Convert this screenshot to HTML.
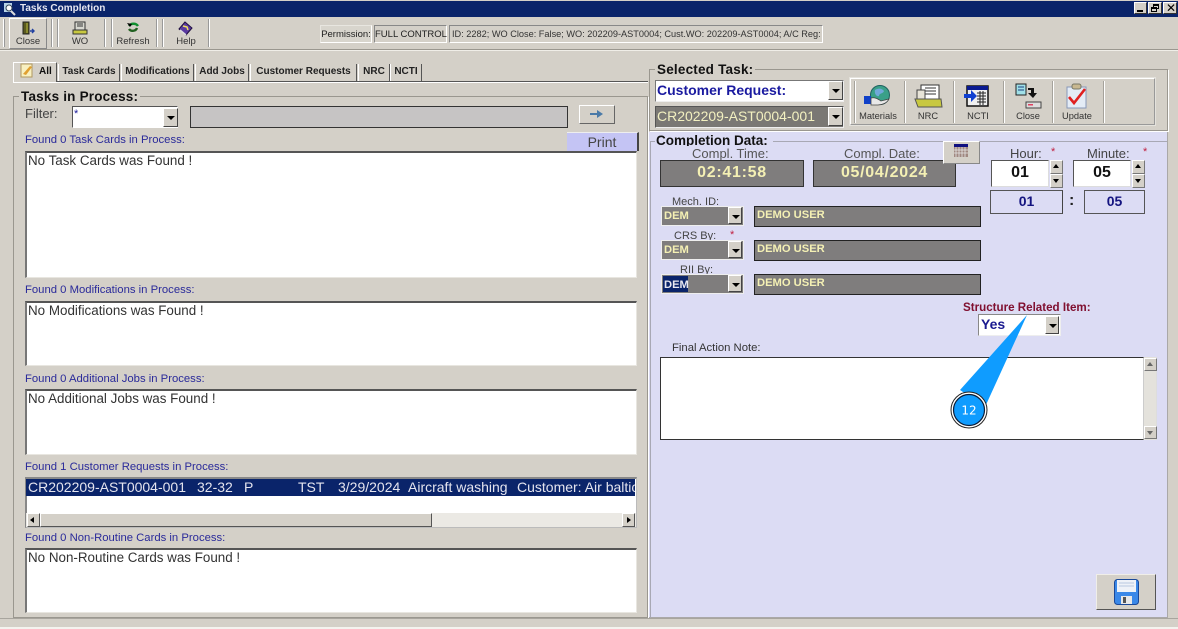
<!DOCTYPE html>
<html><head><meta charset="utf-8"><style>
html,body{margin:0;padding:0}
body{width:1178px;height:629px;overflow:hidden;background:#d4d0c8;position:relative;font-family:"Liberation Sans",sans-serif;color:#222}
div,span,svg{position:absolute;box-sizing:border-box}
.t{white-space:nowrap;line-height:1}
.sep{width:2px;top:19px;height:28px;border-left:1px solid #999;border-right:1px solid #fff}
.sep2{width:2px;top:81px;height:42px;border-left:1px solid #a5a29b;border-right:1px solid #fff}
.lb{font-size:9.5px;color:#333;text-align:center;line-height:1}
.blue{font-size:11.3px;color:#2a2a9a;white-space:nowrap;line-height:1;left:25px}
.box{left:25px;width:612px;background:#fff;border:1px solid #e8e6e0;border-top:2px solid #555;border-left:2px solid #777;font-size:13.4px;color:#333;padding:0 2px 0 1px;line-height:16px}
.tab{top:64px;height:17px;font-size:10px;font-weight:bold;color:#222;line-height:16px;text-align:center;border-left:1px solid #fff;border-right:1px solid #555;white-space:nowrap}
.gb{border:1px solid #9a978f;box-shadow:1px 1px 0 #fff}
.cap{font-size:13.5px;font-weight:bold;color:#111;background:#d4d0c8;padding:0 2px;line-height:1;white-space:nowrap;letter-spacing:.2px}
.dd{width:15px;height:19px;background:#d4d0c8;border:1px solid;border-color:#fff #444 #444 #fff}
.dd:after{content:"";position:absolute;left:3px;top:7px;border:4px solid transparent;border-top:4px solid #000;border-bottom:0}
.gr{background:#7f7d7d;border:1px solid #222;color:#f4f0b4;font-weight:bold;font-size:11.2px;font-family:"Liberation Sans",sans-serif}
.g2{background:#7f7d7d;border:1px solid #333;color:#f4f0b4;font-weight:bold;text-align:center;font-size:16px;letter-spacing:.7px}
.gl{font-size:12px;color:#444;line-height:1;white-space:nowrap}
.star{color:#c02040;font-size:11px;line-height:1}
.sp{width:13px;height:14px;background:#d4d0c8;border:1px solid;border-color:#fff #777 #777 #fff}
</style></head><body>
<!-- title bar -->
<div style="left:0;top:1px;width:1178px;height:16px;background:#0a246a"></div>
<svg style="left:3px;top:2px" width="13" height="14" viewBox="0 0 13 14"><rect x="1" y="1" width="8" height="9" fill="#b8d4e8"/><circle cx="6" cy="6" r="3" fill="#fff" stroke="#345" /><path d="M8 9l4 4" stroke="#ddd" stroke-width="2"/></svg>
<div class="t" style="left:20px;top:4px;font-size:10px;font-weight:bold;color:#e6e6f0">Tasks Completion</div>
<div style="left:1134px;top:2px;width:13px;height:12px;background:#d4d0c8;border:1px solid;border-color:#fff #333 #333 #fff"><div style="left:2px;top:7px;width:6px;height:2px;background:#000"></div></div>
<div style="left:1148px;top:2px;width:14px;height:12px;background:#d4d0c8;border:1px solid;border-color:#fff #333 #333 #fff"><div style="left:4px;top:1px;width:6px;height:5px;border:1px solid #000;border-top-width:2px"></div><div style="left:2px;top:4px;width:6px;height:5px;border:1px solid #000;border-top-width:2px;background:#d4d0c8"></div></div>
<div style="left:1163px;top:2px;width:14px;height:12px;background:#d4d0c8;border:1px solid;border-color:#fff #333 #333 #fff"><div class="t" style="left:2px;top:-1px;font-size:12px;color:#000">✕</div></div>
<!-- toolbar -->
<div style="left:0;top:49px;width:1178px;height:1px;background:#9a978f"></div>
<div style="left:0;top:50px;width:1178px;height:1px;background:#f0eee8"></div>
<div style="left:3px;top:19px;width:2px;height:28px;border-left:1px solid #fff;border-right:1px solid #999"></div>
<div style="left:9px;top:18px;width:38px;height:31px;border:1px solid;border-color:#fff #888 #888 #fff"></div>
<div class="sep" style="left:51px"></div><div class="sep" style="left:57px"></div>
<div class="sep" style="left:104px"></div><div class="sep" style="left:111px"></div>
<div class="sep" style="left:156px"></div><div class="sep" style="left:162px"></div>
<div class="sep" style="left:208px"></div>
<svg style="left:21px;top:21px" width="14" height="15" viewBox="0 0 14 15"><path d="M2 1h6v12H2z" fill="#5a5a20" stroke="#222"/><path d="M5 2h2v10H5z" fill="#8a8a30"/><path d="M9 10h3M11 8l2 2-2 2" stroke="#2040a0" stroke-width="1.4" fill="none"/></svg>
<div class="lb t" style="left:10px;top:37px;width:36px">Close</div>
<svg style="left:72px;top:21px" width="17" height="15" viewBox="0 0 17 15"><rect x="3" y="1" width="10" height="8" fill="#d8d8d0" stroke="#333"/><path d="M5 3h6M5 5h6" stroke="#333"/><path d="M1 9h14v4H1z" fill="#c8c840" stroke="#333"/></svg>
<div class="lb t" style="left:62px;top:37px;width:36px">WO</div>
<svg style="left:126px;top:22px" width="14" height="13" viewBox="0 0 14 13"><path d="M3 4c2-3 7-3 9 0" stroke="#109030" stroke-width="2.4" fill="none"/><path d="M11 6c-1 3-6 4-8 1" stroke="#206020" stroke-width="2.4" fill="none"/><path d="M1 1l3 4 2-3z" fill="#000"/></svg>
<div class="lb t" style="left:113px;top:37px;width:40px">Refresh</div>
<svg style="left:178px;top:21px" width="15" height="15" viewBox="0 0 15 15"><path d="M7 1l7 6-6 7-7-6z" fill="#5a3aa0" stroke="#201040"/><path d="M5 5l4 1 1 3" stroke="#f0e060" fill="none" stroke-width="1.5"/><path d="M2 9l6 5" stroke="#ddd" stroke-width="1.5"/></svg>
<div class="lb t" style="left:166px;top:37px;width:40px">Help</div>
<!-- permission -->
<div class="t" style="left:320px;top:25px;width:52px;height:18px;background:#d8d5cd;border:1px solid;border-color:#e8e6e0 #fff #fff #e8e6e0;font-size:9.5px;line-height:17px;text-align:center;color:#222">Permission:</div>
<div class="t" style="left:374px;top:25px;width:73px;height:18px;border:1px solid;border-color:#888 #fff #fff #888;font-size:9.5px;line-height:17px;text-align:center;color:#222">FULL CONTROL</div>
<div class="t" style="left:449px;top:25px;width:374px;height:18px;border:1px solid;border-color:#888 #fff #fff #888;font-size:9.2px;line-height:16px;padding-left:2px;overflow:hidden;color:#333">ID: 2282; WO Close: False; WO: 202209-AST0004; Cust.WO: 202209-AST0004; A/C Reg:</div>
<!-- tabs -->
<div style="left:13px;top:81px;width:635px;height:1px;background:#555"></div>
<div style="left:13px;top:82px;width:635px;height:1px;background:#fff"></div>
<div style="left:13px;top:62px;width:44px;height:20px;background:#d4d0c8;border-top:1px solid #fff;border-left:1px solid #fff;border-right:1px solid #555"></div>
<svg style="left:20px;top:63px" width="14" height="15" viewBox="0 0 14 15"><rect x="1" y="1" width="11" height="13" fill="#f8f0c0" stroke="#b09860"/><path d="M3 11L10 3l2 1-6 8z" fill="#e0a030"/></svg>
<div class="t" style="left:39px;top:67px;font-size:10px;font-weight:bold;color:#111">All</div>
<div class="tab" style="left:58px;width:62px">Task Cards</div>
<div class="tab" style="left:121px;width:73px">Modifications</div>
<div class="tab" style="left:195px;width:54px">Add Jobs</div>
<div class="tab" style="left:250px;width:107px">Customer Requests</div>
<div class="tab" style="left:358px;width:32px">NRC</div>
<div class="tab" style="left:390px;width:32px">NCTI</div>
<!-- tasks group -->
<div class="gb" style="left:13px;top:96px;width:635px;height:522px"></div>
<div class="cap" style="left:19px;top:90px">Tasks in Process:</div>
<div class="t" style="left:25px;top:107px;font-size:13px;color:#444">Filter:</div>
<div style="left:72px;top:106px;width:106px;height:22px;background:#fff;border:1px solid;border-color:#555 #fff #fff #555;font-size:11px;color:#1a1a9a;padding-left:1px;line-height:14px">*</div>
<div class="dd" style="left:163px;top:108px"></div>
<div style="left:190px;top:106px;width:378px;height:22px;background:#c6c4c4;border:1px solid #333"></div>
<div style="left:579px;top:105px;width:36px;height:19px;background:#d4d0c8;border:1px solid;border-color:#fff #666 #666 #fff"></div>
<svg style="left:590px;top:109px" width="14" height="10" viewBox="0 0 14 10"><path d="M0 4h7V1l6 4-6 4V6H0z" fill="#4a7aa8"/></svg>
<div class="t" style="left:567px;top:132px;width:72px;height:19px;background:#c4c4f4;border-right:2px solid #444;border-top:1px solid #eee;font-size:14px;line-height:19px;text-align:center;color:#444">Print</div>
<div class="blue" style="top:135px">Found 0 Task Cards in Process:</div>
<div class="box" style="top:151px;height:127px">No Task Cards was Found !</div>
<div class="blue" style="top:285px">Found 0 Modifications in Process:</div>
<div class="box" style="top:301px;height:65px">No Modifications was Found !</div>
<div class="blue" style="top:374px">Found 0 Additional Jobs in Process:</div>
<div class="box" style="top:389px;height:66px">No Additional Jobs was Found !</div>
<div class="blue" style="top:462px">Found 1 Customer Requests in Process:</div>
<div style="left:25px;top:477px;width:612px;height:51px;background:#fff;border:1px solid #bbb;border-top:2px solid #888;border-left:2px solid #888"></div>
<div style="left:26px;top:479px;width:609px;height:17px;background:#0a246a;color:#e4e4ee;font-size:14px;line-height:17px;overflow:hidden;white-space:nowrap">
<span style="left:2px">CR202209-AST0004-001</span><span style="left:171px">32-32</span><span style="left:218px">P</span><span style="left:272px">TST</span><span style="left:312px">3/29/2024</span><span style="left:382px">Aircraft washing</span><span style="left:491px">Customer: Air baltic</span></div>
<div style="left:26px;top:513px;width:610px;height:14px;background:#ebe9e4"></div>
<div style="left:27px;top:513px;width:13px;height:14px;background:#d4d0c8;border:1px solid;border-color:#fff #555 #555 #fff"></div>
<div style="left:30px;top:517px;border:3px solid transparent;border-right:4px solid #000;border-left:0;width:0;height:0"></div>
<div style="left:40px;top:513px;width:392px;height:14px;background:#d4d0c8;border:1px solid;border-color:#fff #555 #555 #fff"></div>
<div style="left:622px;top:513px;width:13px;height:14px;background:#d4d0c8;border:1px solid;border-color:#fff #555 #555 #fff"></div>
<div style="left:627px;top:517px;border:3px solid transparent;border-left:4px solid #000;border-right:0;width:0;height:0"></div>
<div class="blue" style="top:533px">Found 0 Non-Routine Cards in Process:</div>
<div class="box" style="top:548px;height:65px">No Non-Routine Cards was Found !</div>
<!-- selected task -->
<div class="gb" style="left:649px;top:69px;width:519px;height:62px"></div>
<div class="cap" style="left:655px;top:63px">Selected Task:</div>
<div style="left:655px;top:80px;width:189px;height:22px;background:#fff;border:1px solid;border-color:#777 #eee #eee #777;color:#1a1aa0;font-size:14px;font-weight:bold;line-height:18px;padding-left:1px;white-space:nowrap">Customer Request:</div>
<div class="dd" style="left:828px;top:81px;width:15px;height:19px"></div>
<div style="left:655px;top:106px;width:189px;height:22px;background:#7a7874;border:1px solid;border-color:#555 #eee #eee #555;color:#f2f0c0;font-size:14px;line-height:19px;padding-left:1px;white-space:nowrap">CR202209-AST0004-001</div>
<div class="dd" style="left:828px;top:107px;width:15px;height:19px"></div>
<div style="left:850px;top:78px;width:305px;height:47px;border:1px solid;border-color:#fff #999 #999 #fff;box-shadow:0 0 0 1px #e4e2dc"></div>
<div class="sep2" style="left:854px"></div><div class="sep2" style="left:904px"></div><div class="sep2" style="left:953px"></div><div class="sep2" style="left:1003px"></div><div class="sep2" style="left:1052px"></div><div class="sep2" style="left:1103px"></div>
<svg style="left:863px;top:84px" width="30" height="24" viewBox="0 0 30 24"><circle cx="17" cy="11" r="9.5" fill="#3aa088" stroke="#206060"/><path d="M12 6c3-2 7-2 9 1-1 3-5 2-5 5-2 1-5-2-4-6z" fill="#70a8d8"/><rect x="1" y="12" width="7" height="8" fill="#1040c8"/><path d="M8 14c4-1 7 1 10 3l8-2c-2 4-7 6-11 6H8z" fill="#e8e8e8" stroke="#444" stroke-width=".8"/></svg>
<div class="lb t" style="left:854px;top:112px;width:48px;font-size:9.3px">Materials</div>
<svg style="left:914px;top:83px" width="29" height="25" viewBox="0 0 29 25"><rect x="7" y="2" width="18" height="15" fill="#fff" stroke="#333"/><path d="M11 5h11M11 8h11M11 11h11" stroke="#333"/><rect x="3" y="7" width="8" height="10" fill="#e8e4d8" stroke="#444"/><path d="M1 16h26l1 8H4z" fill="#c8c840" stroke="#555"/></svg>
<div class="lb t" style="left:904px;top:112px;width:48px;font-size:9.3px">NRC</div>
<svg style="left:964px;top:85px" width="26" height="22" viewBox="0 0 26 22"><rect x="3" y="1" width="21" height="20" fill="#f0f0f0" stroke="#111" stroke-width="1.5"/><rect x="3" y="1" width="21" height="4" fill="#0a1a90"/><path d="M13 8h9M13 11h9M13 14h9M13 17h9M16 6v14M19 6v14" stroke="#222"/><path d="M0 9h7V5l6 6-6 6v-4H0z" fill="#1040d0"/></svg>
<div class="lb t" style="left:954px;top:112px;width:48px;font-size:9.3px">NCTI</div>
<svg style="left:1015px;top:83px" width="27" height="26" viewBox="0 0 27 26"><rect x="1" y="1" width="10" height="11" fill="#a0e0e8" stroke="#222"/><path d="M3 4h6M3 7h6" stroke="#204080"/><path d="M13 5h6v5h3l-4 5-5-5h3V7h-3z" fill="#111"/><rect x="11" y="19" width="15" height="6" fill="#ddd" stroke="#444"/><rect x="13" y="21" width="5" height="1.5" fill="#e04060"/></svg>
<div class="lb t" style="left:1004px;top:112px;width:48px;font-size:9.3px">Close</div>
<svg style="left:1065px;top:83px" width="25" height="26" viewBox="0 0 25 26"><rect x="2" y="4" width="19" height="21" fill="#e4ecf6" stroke="#8898b8"/><rect x="7" y="1" width="9" height="5" rx="2" fill="#c8b890" stroke="#776"/><path d="M4 14l5 6L20 6" stroke="#e02020" stroke-width="2.6" fill="none"/></svg>
<div class="lb t" style="left:1053px;top:112px;width:48px;font-size:9.3px">Update</div>
<!-- completion -->
<div style="left:649px;top:132px;width:519px;height:486px;background:#dcdcf4;border-right:1px solid #aaa8a8;border-bottom:1px solid #aaa8a8"></div>
<div style="left:650px;top:141px;width:517px;height:1px;background:#a8a8b4"></div>
<div style="left:650px;top:141px;width:1px;height:477px;background:#a8a8b4"></div>
<div style="left:655px;top:134px;width:118px;height:12px;background:#dcdcf4"></div>
<div class="t" style="left:656px;top:134px;font-size:13.5px;font-weight:bold;color:#111;height:12px;overflow:hidden">Completion Data:</div>
<div class="gl" style="left:692px;top:147px;font-size:13px;color:#555">Compl. Time:</div>
<div class="gl" style="left:844px;top:147px;font-size:13px;color:#555">Compl. Date:</div>
<div class="g2" style="left:660px;top:160px;width:144px;height:27px;line-height:23px">02:41:58</div>
<div class="g2" style="left:813px;top:160px;width:143px;height:27px;line-height:23px">05/04/2024</div>
<div style="left:943px;top:141px;width:37px;height:23px;background:#d4d0c8;border:1px solid;border-color:#fff #888 #888 #fff"></div>
<svg style="left:954px;top:144px" width="14" height="13" viewBox="0 0 14 13"><rect width="14" height="13" fill="#a08880"/><rect width="14" height="3" fill="#101080"/><path d="M2 3v10M5 3v10M8 3v10M11 3v10M0 6h14M0 9h14" stroke="#e8e8e8" stroke-width=".8"/></svg>
<div class="gl" style="left:1010px;top:147px;font-size:13px;color:#444">Hour:</div>
<div class="star" style="left:1051px;top:147px">*</div>
<div class="gl" style="left:1087px;top:147px;font-size:13px;color:#444">Minute:</div>
<div class="star" style="left:1143px;top:147px">*</div>
<div style="left:991px;top:160px;width:58px;height:27px;background:#fff;border:1px solid;border-color:#555 #ddd #ddd #555;font-size:16px;font-weight:bold;color:#111;text-align:center;line-height:23px">01</div>
<div class="sp" style="left:1050px;top:160px"></div><div class="sp" style="left:1050px;top:174px"></div>
<div style="left:1053px;top:164px;border:3px solid transparent;border-bottom:4px solid #000;border-top:0"></div>
<div style="left:1053px;top:179px;border:3px solid transparent;border-top:4px solid #000;border-bottom:0"></div>
<div style="left:1073px;top:160px;width:58px;height:27px;background:#fff;border:1px solid;border-color:#555 #ddd #ddd #555;font-size:16px;font-weight:bold;color:#111;text-align:center;line-height:23px">05</div>
<div class="sp" style="left:1132px;top:160px"></div><div class="sp" style="left:1132px;top:174px"></div>
<div style="left:1135px;top:164px;border:3px solid transparent;border-bottom:4px solid #000;border-top:0"></div>
<div style="left:1135px;top:179px;border:3px solid transparent;border-top:4px solid #000;border-bottom:0"></div>
<div style="left:990px;top:190px;width:73px;height:24px;border:1px solid #555;border-right-color:#444;font-size:14px;font-weight:bold;color:#141480;text-align:center;line-height:21px">01</div>
<div class="t" style="left:1069px;top:193px;font-size:16px;font-weight:bold;color:#222">:</div>
<div style="left:1084px;top:190px;width:61px;height:24px;border:1px solid #555;font-size:14px;font-weight:bold;color:#141480;text-align:center;line-height:21px">05</div>
<!-- people -->
<div class="gl" style="left:672px;top:197px;font-size:11px">Mech. ID:</div>
<div class="gr" style="left:661px;top:206px;width:83px;height:20px;border-color:#eee;line-height:18px;padding-left:2px">DEM</div>
<div class="dd" style="left:728px;top:207px;width:14px;height:17px"></div>
<div class="gr" style="left:754px;top:206px;width:227px;height:21px;line-height:16px;padding-left:2px">DEMO USER</div>
<div class="gl" style="left:674px;top:231px;font-size:11px">CRS By:</div>
<div class="star" style="left:730px;top:230px">*</div>
<div class="gr" style="left:661px;top:240px;width:83px;height:20px;border-color:#eee;line-height:18px;padding-left:2px">DEM</div>
<div class="dd" style="left:728px;top:241px;width:14px;height:17px"></div>
<div class="gr" style="left:754px;top:240px;width:227px;height:21px;line-height:16px;padding-left:2px">DEMO USER</div>
<div class="gl" style="left:680px;top:265px;font-size:11px">RII By:</div>
<div class="gr" style="left:661px;top:274px;width:83px;height:20px;border-color:#eee;line-height:18px;padding-left:1px"><span style="left:1px;top:1px;width:25px;height:16px;background:#0a246a;color:#e8e8f0;padding-left:1px">DEM</span></div>
<div class="dd" style="left:728px;top:275px;width:14px;height:17px"></div>
<div class="gr" style="left:754px;top:274px;width:227px;height:21px;line-height:16px;padding-left:2px">DEMO USER</div>
<div class="t" style="left:963px;top:302px;font-size:11.6px;font-weight:bold;color:#801030">Structure Related Item:</div>
<div style="left:978px;top:314px;width:83px;height:22px;background:#fff;border:1px solid;border-color:#888 #eee #eee #888;color:#1a1a90;font-size:14px;font-weight:bold;line-height:18px;padding-left:2px">Yes</div>
<div class="dd" style="left:1045px;top:316px;width:14px;height:18px"></div>
<div class="gl" style="left:672px;top:343px;font-size:11.3px;color:#333">Final Action Note:</div>
<div style="left:660px;top:357px;width:484px;height:83px;background:#fff;border:1px solid #333;border-right-color:#ccc;border-bottom-color:#333"></div>
<div style="left:1144px;top:357px;width:13px;height:83px;background:#e4e2dc;border-right:1px solid #ddd"></div>
<div class="sp" style="left:1144px;top:358px;height:13px"></div><div class="sp" style="left:1144px;top:426px;height:13px"></div>
<div style="left:1147px;top:362px;border:3px solid transparent;border-bottom:4px solid #666;border-top:0"></div>
<div style="left:1147px;top:431px;border:3px solid transparent;border-top:4px solid #666;border-bottom:0"></div>
<!-- save -->
<div style="left:1096px;top:574px;width:60px;height:36px;background:#d4d0c8;border:1px solid;border-color:#f0eee8 #555 #555 #f0eee8"></div>
<svg style="left:1114px;top:579px" width="25" height="26" viewBox="0 0 25 26"><rect x=".5" y=".5" width="24" height="25" rx="3" fill="#3a88e8" stroke="#1a4898"/><rect x="3" y="1" width="19" height="12" fill="#eef2f8"/><path d="M5 4h15M5 7h15" stroke="#b8c8e0"/><rect x="7" y="17" width="11" height="8" fill="#e8e8e8"/><rect x="9" y="18" width="3" height="6" fill="#555"/></svg>
<!-- callout -->
<svg style="left:945px;top:310px;z-index:5" width="90" height="120" viewBox="0 0 90 120"><path d="M82 5L15 80 40 97z" fill="#0f9cff"/><circle cx="24" cy="100" r="18" fill="#fff" stroke="#222" stroke-width="1"/><circle cx="24" cy="100" r="15.5" fill="#0f9cff" stroke="#0b1e3a" stroke-width="1.2"/><text x="24" y="104.500" text-anchor="middle" font-family="DejaVu Sans,sans-serif" font-size="12" fill="#fff">12</text></svg>
<div style="left:0;top:618px;width:649px;height:1px;background:#a8a59e"></div>
<div style="left:649px;top:618px;width:529px;height:1px;background:#a8a59e"></div>
<div style="left:0;top:627px;width:1178px;height:2px;background:#f4f3ef"></div>
</body></html>
